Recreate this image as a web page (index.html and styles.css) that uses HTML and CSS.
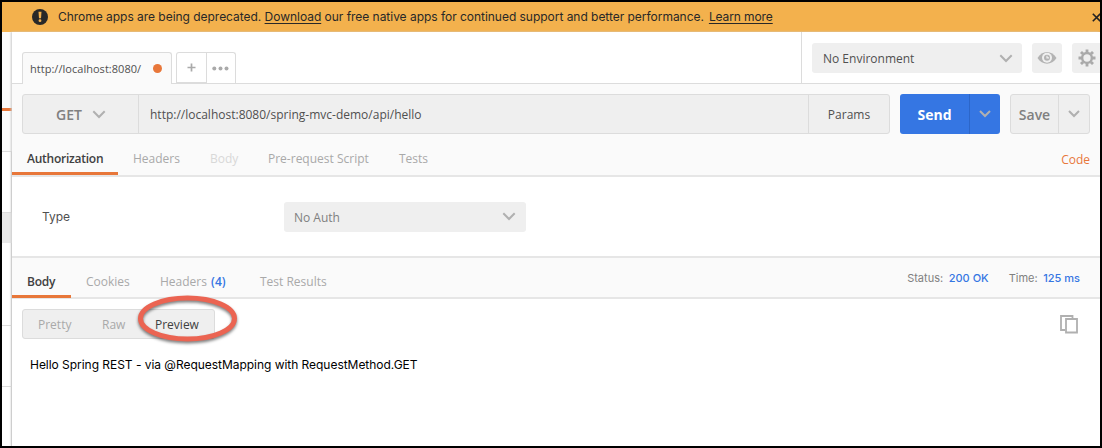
FILE: index.html
```html
<!DOCTYPE html>
<html lang="en">
<head>
<meta charset="utf-8">
<title>Postman</title>
<link rel="stylesheet" href="styles.css">
</head>
<body>
<div class="window">
  <div class="banner">
    <svg class="alert" width="16" height="16" viewBox="0 0 16 16"><circle cx="8" cy="8" r="8" fill="#282828"/><path d="M6.500 2.800h3L9 9.300H7z" fill="#f3b14d"/><circle cx="8" cy="11.700" r="1.400" fill="#f3b14d"/></svg>
    <span class="banner-text"><span class="b1">Chrome apps are being deprecated. <a>Download</a> our free native apps for continued support and better performance.</span><a class="learn">Learn more</a></span>
    <svg class="close" width="9" height="9" viewBox="0 0 9 9"><path d="M.8.8l7.4 7.4M8.2.8L.8 8.2" stroke="#222" stroke-width="1.6"/></svg>
  </div>
  <div class="body">
    <div class="sidebar">
      <div class="side-top"></div>
      <div class="side-head"></div>
      <div class="side-row row-a"></div>
      <div class="side-active"></div>
      <div class="side-row row-b"></div>
      <div class="side-row row-c"></div>
    </div>
    <main class="main">
      <header class="topbar">
        <div class="tab"><span class="tab-name">http://localhost:8080/</span><i class="dot"></i></div>
        <div class="tab-actions">
          <div class="tab-add"><svg width="9" height="9" viewBox="0 0 9 9"><path d="M4.5.5v8M.5 4.5h8" stroke="#aaa" stroke-width="1.7"/></svg></div>
          <div class="tab-more"><svg width="17" height="5" viewBox="0 0 17 5" fill="#aaa"><circle cx="2.3" cy="2.5" r="2"/><circle cx="8.5" cy="2.5" r="2"/><circle cx="14.5" cy="2.5" r="2"/></svg></div>
        </div>
        <div class="env">
          <div class="select env-select"><span class="env-name">No Environment</span><svg class="chev" width="14" height="9" viewBox="0 0 14 9"><path d="M1.3 1.3L7 7l5.700-5.700"/></svg></div>
          <div class="icon-btn"><svg width="20" height="14" viewBox="0 0 20 14"><path d="M.5 7C5-1 15-1 19.500 7 15 14.500 5 14.500.5 7z" fill="#b3b3b3"/><circle cx="10" cy="6.800" r="5" fill="#efefef"/><circle cx="10" cy="6.800" r="3" fill="#b3b3b3"/><path d="M10 4.800v2h2" fill="none" stroke="#efefef" stroke-width="1.200"/></svg></div>
          <div class="icon-btn gear"><svg width="18" height="18" viewBox="-9 -9 18 18"><circle r="4.900" fill="none" stroke="#aaa" stroke-width="2.500"/><g stroke="#aaa" stroke-width="2.800"><path d="M0-8.500v3M0 5.500v3M-8.500 0h3M5.500 0h3"/><path transform="rotate(45)" d="M0-8.500v3M0 5.500v3M-8.500 0h3M5.500 0h3"/></g></svg></div>
        </div>
      </header>
      <section class="request">
        <div class="url-row">
          <div class="url-group">
            <div class="method"><span class="get">GET</span><svg class="chev" width="14" height="9" viewBox="0 0 14 9"><path d="M1.300 1.300L7 7l5.700-5.700"/></svg></div>
            <div class="url"><span class="url-text">http://localhost:8080/spring-mvc-demo/api/hello</span></div>
            <div class="params"><span>Params</span></div>
          </div>
          <div class="send"><b>Send</b><div class="drop"><svg class="chev" width="12" height="8" viewBox="0 0 12 8"><path d="M1 1l5 5 5-5"/></svg></div></div>
          <div class="save"><b>Save</b><div class="drop"><svg class="chev" width="12" height="8" viewBox="0 0 12 8"><path d="M1 1l5 5 5-5"/></svg></div></div>
        </div>
        <nav class="tabs req-tabs">
          <span class="item w1 active">Authorization</span><span class="item w2">Headers</span><span class="item w3 disabled">Body</span><span class="item w4">Pre-request Script</span><span class="item w5">Tests</span>
          <a class="code">Code</a>
        </nav>
      </section>
      <section class="auth">
        <label>Type</label>
        <div class="select auth-select"><span>No Auth</span><svg class="chev" width="14" height="9" viewBox="0 0 14 9"><path d="M1.300 1.300L7 7l5.700-5.700"/></svg></div>
      </section>
      <nav class="tabs res-tabs">
        <span class="item r1 active">Body</span><span class="item r2">Cookies</span><span class="item r3">Headers <em>(4)</em></span><span class="item r4">Test Results</span>
        <div class="meta"><span class="status">Status: <em>200 OK</em></span><span class="time">Time: <em>125 ms</em></span></div>
      </nav>
      <section class="response">
        <div class="view-row">
          <div class="views"><span class="v1">Pretty</span><span class="v2">Raw</span><span class="v3">Preview</span>
            <svg class="ring" width="110" height="60" viewBox="0 0 110 60"><ellipse cx="55.500" cy="26.500" rx="47" ry="20.500" fill="none" stroke="#eb6452" stroke-width="5"/></svg>
          </div>
          <svg class="copy" width="18" height="19" viewBox="0 0 18 19" fill="none" stroke="#b0b0b0" stroke-width="1.800"><path d="M12.500 3.500V1H1v14h4"/><path d="M6 4h11v13.500H6z"/></svg>
        </div>
        <p class="output">Hello Spring REST - via @RequestMapping with RequestMethod.GET</p>
      </section>
    </main>
  </div>
</div>
</body>
</html>
```
FILE: styles.css
```css
* { box-sizing: border-box; }
body { margin: 0; background: #000; font: 12px/16px "Open Sans", sans-serif; color: #505050; white-space: nowrap; }
svg { display: block; flex: none; }
em { font-style: normal; color: #3576e3; }
.window { width: 1102px; height: 448px; border: 2px solid #000; display: flex; flex-direction: column; overflow: hidden; background: #fff; }
.banner { height: 30px; flex: none; background: #f3b14d; display: flex; align-items: center; padding-left: 30px; font-family: Inter, sans-serif; color: #282828; }
.banner-text { flex: 1; padding-left: 10px; letter-spacing: -.03px; }
.banner a { text-decoration: underline; text-underline-offset: 2px; }
.banner .learn { margin-left: 5px; letter-spacing: -.1px; }
.close { margin-right: -1px; }
.body { flex: 1; display: flex; min-height: 0; }
.sidebar { width: 10px; flex: none; background: #fff; box-shadow: inset -1px 0 #d4d4d4; }
.side-top { height: 79px; background: #fafafa; border-bottom: 3px solid #e8773a; }
.side-head { height: 41px; background: #fafafa; border-bottom: 1px solid #dcdcdc; }
.side-row { border-bottom: 1px solid #dcdcdc; }
.row-a { height: 61px; }
.side-active { height: 30px; background: #e9e9e9; }
.row-b { height: 83px; }
.row-c { height: 61px; }
.main { flex: 1; display: flex; flex-direction: column; box-shadow: -1px 0 2px #ccc; min-width: 0; background: #fff; }
.topbar { height: 52px; flex: none; display: flex; align-items: flex-end; border-bottom: 1px solid #dcdcdc; padding-left: 10px; }
.tab { width: 150px; height: 32px; margin-bottom: -1px; border: 1px solid #dcdcdc; border-bottom: 0; border-radius: 3px 3px 0 0; background: #fafafa; display: flex; align-items: center; justify-content: space-between; padding: 0 9px 0 7px; }
.tab-name { font-size: 11px; letter-spacing: .03px; }
.dot { width: 9px; height: 9px; border-radius: 50%; background: #e8773a; }
.tab-actions { display: flex; height: 31px; width: 60px; margin-left: 4px; border: 1px solid #dcdcdc; border-bottom: 0; border-radius: 3px 3px 0 0; }
.tab-add, .tab-more { flex: 1; display: flex; align-items: center; justify-content: center; }
.tab-add { border-right: 1px solid #dcdcdc; border-bottom: 1px solid #dcdcdc; }
.env { margin-left: auto; width: 299px; height: 51px; border-left: 1px solid #dcdcdc; padding: 11px 0 0 10px; display: flex; gap: 10px; align-items: flex-start; overflow: hidden; }
.select { height: 30px; background: #efefef; border-radius: 3px; display: flex; align-items: center; justify-content: space-between; padding: 0 10px; }
.select span, .url span, .params span { padding-top: 2px; }
.env-select { width: 210px; flex: none; padding: 0 9px 0 11px; }
.icon-btn { width: 30px; height: 30px; flex: none; background: #efefef; border-radius: 3px; display: flex; align-items: center; justify-content: center; }
.chev { fill: none; stroke: #b0b0b0; stroke-width: 2; }
.request { height: 93px; flex: none; background: #fafafa; border-bottom: 2px solid #e6e6e6; display: flex; flex-direction: column; }
.url-row { display: flex; height: 50px; padding: 10px 0 0 10px; gap: 10px; }
.url-group { width: 868px; display: flex; background: #efefef; border: 1px solid #dcdcdc; border-radius: 3px; }
.method { width: 116px; border-right: 1px solid #dcdcdc; display: flex; align-items: center; gap: 10px; padding-left: 33px; font-size: 14px; font-weight: 600; color: #808080; }
.get { padding-top: 1px; }
.url { flex: 1; display: flex; align-items: center; padding-left: 11px; }
.params { width: 81px; border-left: 1px solid #dcdcdc; display: flex; align-items: center; justify-content: center; }
.send, .save { display: flex; align-items: stretch; border-radius: 3px; font-size: 14px; }
.send { width: 100px; background: #3576e3; color: #fff; }
.save { width: 80px; background: #efefef; border: 1px solid #dcdcdc; color: #808080; }
.send b, .save b { flex: 1; display: flex; align-items: center; justify-content: center; padding-top: 1px; }
.save b { font-weight: 600; }
.drop { width: 31px; display: flex; align-items: center; justify-content: center; border-left: 1px solid #2c66c9; }
.save .drop { border-color: #dcdcdc; }
.tabs { display: flex; color: #a9a9a9; }
.item { padding-left: 15px; }
.item.active { color: #404040; border-bottom: 3px solid #e8773a; }
.item.disabled { color: #d8d8d8; }
.req-tabs { height: 41px; }
.req-tabs .item { padding-top: 17px; }
.w1 { width: 106px; } .w2 { width: 77px; } .w3 { width: 58px; } .w4 { width: 131px; }
.w1.item { font-weight: 600; letter-spacing: -.25px; }
.code { margin-left: auto; padding: 18px 10px 0 0; color: #e8773a; }
.auth { height: 79px; flex: none; display: flex; align-items: center; padding-left: 30px; }
.auth label { width: 242px; font-family: Inter, sans-serif; }
.auth-select { width: 242px; color: #808080; }
.res-tabs { height: 43px; flex: none; background: #fafafa; border-top: 2px solid #e6e6e6; border-bottom: 2px solid #e6e6e6; }
.res-tabs .item { padding-top: 16px; }
.r1.item { width: 59px; font-weight: 600; letter-spacing: -.2px; margin-bottom: -1px; }
.r2 { width: 74px; } .r3 { width: 100px; } .r3 em { margin-left: 1px; font-weight: 600; }
.meta { margin-left: auto; padding: 12px 20px 0 0; display: flex; gap: 20px; font: 11px/16px Inter, sans-serif; color: #808080; }
.meta em { font-weight: 500; margin-left: 2.5px; }
.response { padding: 10px 22px 0 10px; }
.view-row { display: flex; justify-content: space-between; }
.views { position: relative; width: 193px; height: 30px; background: #efefef; border: 1px solid #dcdcdc; border-radius: 3px; display: flex; align-items: center; color: #a9a9a9; padding-left: 15px; }
.views span { padding-top: 2px; }
.v1 { width: 64px; } .v2 { width: 53px; } .v3 { color: #404040; }
.ring { position: absolute; left: 109px; top: -18px; filter: drop-shadow(0 2px 1.500px rgba(0,0,0,.5)); }
.views .v3 { z-index: 1; }
.copy { margin-top: 6px; }
.output { margin: 18px 0 0 8px; font-family: Inter, sans-serif; letter-spacing: -.035px; color: #000; }
```
